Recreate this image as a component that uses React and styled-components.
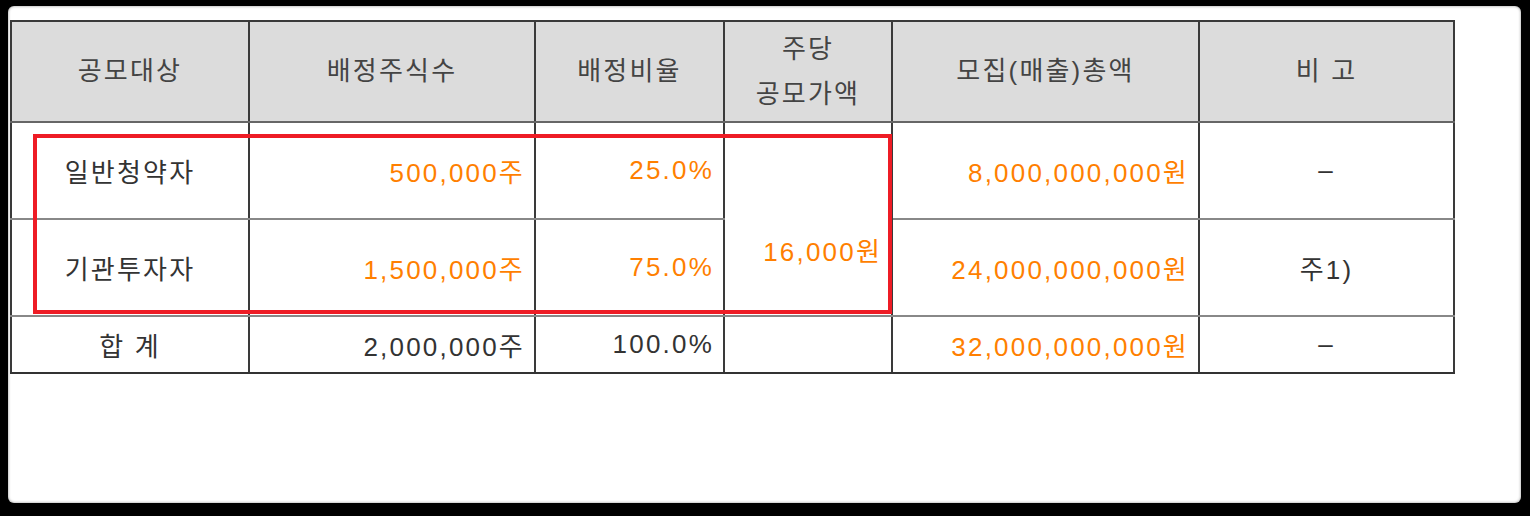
import React from 'react';
import styled, { createGlobalStyle } from 'styled-components';

const GlobalStyle = createGlobalStyle`
    html, body {
        margin: 0;
        padding: 0;
        background: #000;
    }
    body {
        width: 1530px;
        height: 516px;
        overflow: hidden;
    }
`;

const Paper = styled.div`
    position: relative;
    margin: 6px 0 0 8px;
    width: 1513px;
    height: 497px;
    background: #fff;
    border-radius: 6px;
    box-shadow: inset 0 0 3px rgba(0, 0, 0, 0.45);
    padding: 14px 0 0 2px;
    box-sizing: border-box;
`;

const TableWrap = styled.div`
    position: relative;
    width: 1443px;
`;

const Table = styled.table`
    width: 1443px;
    border-collapse: collapse;
    table-layout: fixed;
    font-family: "Liberation Sans", "Noto Sans CJK KR", sans-serif;
    font-size: 26px;
    letter-spacing: 2.2px;
    color: #333;

    tbody tr:last-child td {
        border-bottom-color: #333;
    }
`;

const HeadCell = styled.th`
    height: 99px;
    background: #dcdcdc;
    color: #444;
    font-weight: 400;
    line-height: 45px;
    text-align: center;
    border: 2px solid #3a3a3a;
    border-bottom-color: #666;
    padding: 0;
`;

const Cell = styled.td`
    height: ${p => p.$h}px;
    text-align: ${p => p.$align || 'center'};
    color: ${p => (p.$orange ? '#ff7f00' : '#333')};
    padding: ${p => p.$pad || '0 9px 0 0'};
    border-left: 2px solid #3a3a3a;
    border-right: 2px solid #3a3a3a;
    border-top: 2px solid #888;
    border-bottom: 2px solid #888;
    vertical-align: middle;
    white-space: nowrap;
`;

const Highlight = styled.div`
    position: absolute;
    left: 23px;
    top: 114px;
    width: 859px;
    height: 180px;
    box-sizing: border-box;
    border: 4px solid #ee1c25;
    pointer-events: none;
`;

const cols = [238, 286, 189, 168, 307, 255];

const rows = [
    { who: '일반청약자', shares: '500,000주', ratio: '25.0%', total: '8,000,000,000원', note: '–' },
    { who: '기관투자자', shares: '1,500,000주', ratio: '75.0%', total: '24,000,000,000원', note: '주1)' },
];

function App() {
    return (
        <>
            <GlobalStyle />
            <Paper>
                <TableWrap>
                    <Table>
                        <colgroup>
                            {cols.map((w, i) => <col key={i} style={{ width: w }} />)}
                        </colgroup>
                        <thead>
                            <tr>
                                <HeadCell>공모대상</HeadCell>
                                <HeadCell>배정주식수</HeadCell>
                                <HeadCell>배정비율</HeadCell>
                                <HeadCell>주당<br />공모가액</HeadCell>
                                <HeadCell>모집(매출)총액</HeadCell>
                                <HeadCell>비 고</HeadCell>
                            </tr>
                        </thead>
                        <tbody>
                            {rows.map((r, i) => (
                                <tr key={i}>
                                    <Cell $h={95} $pad="0">{r.who}</Cell>
                                    <Cell $align="right" $orange>{r.shares}</Cell>
                                    <Cell $align="right" $orange>{r.ratio}</Cell>
                                    {i === 0 && (
                                        <Cell rowSpan={2} $align="right" $orange $pad="60px 9px 0 0">16,000원</Cell>
                                    )}
                                    <Cell $align="right" $orange>{r.total}</Cell>
                                    <Cell $pad="0">{r.note}</Cell>
                                </tr>
                            ))}
                            <tr>
                                <Cell $h={55} $pad="0">합 계</Cell>
                                <Cell $align="right">2,000,000주</Cell>
                                <Cell $align="right">100.0%</Cell>
                                <Cell />
                                <Cell $align="right" $orange>32,000,000,000원</Cell>
                                <Cell $pad="0">–</Cell>
                            </tr>
                        </tbody>
                    </Table>
                    <Highlight />
                </TableWrap>
            </Paper>
        </>
    );
}

export default App;
